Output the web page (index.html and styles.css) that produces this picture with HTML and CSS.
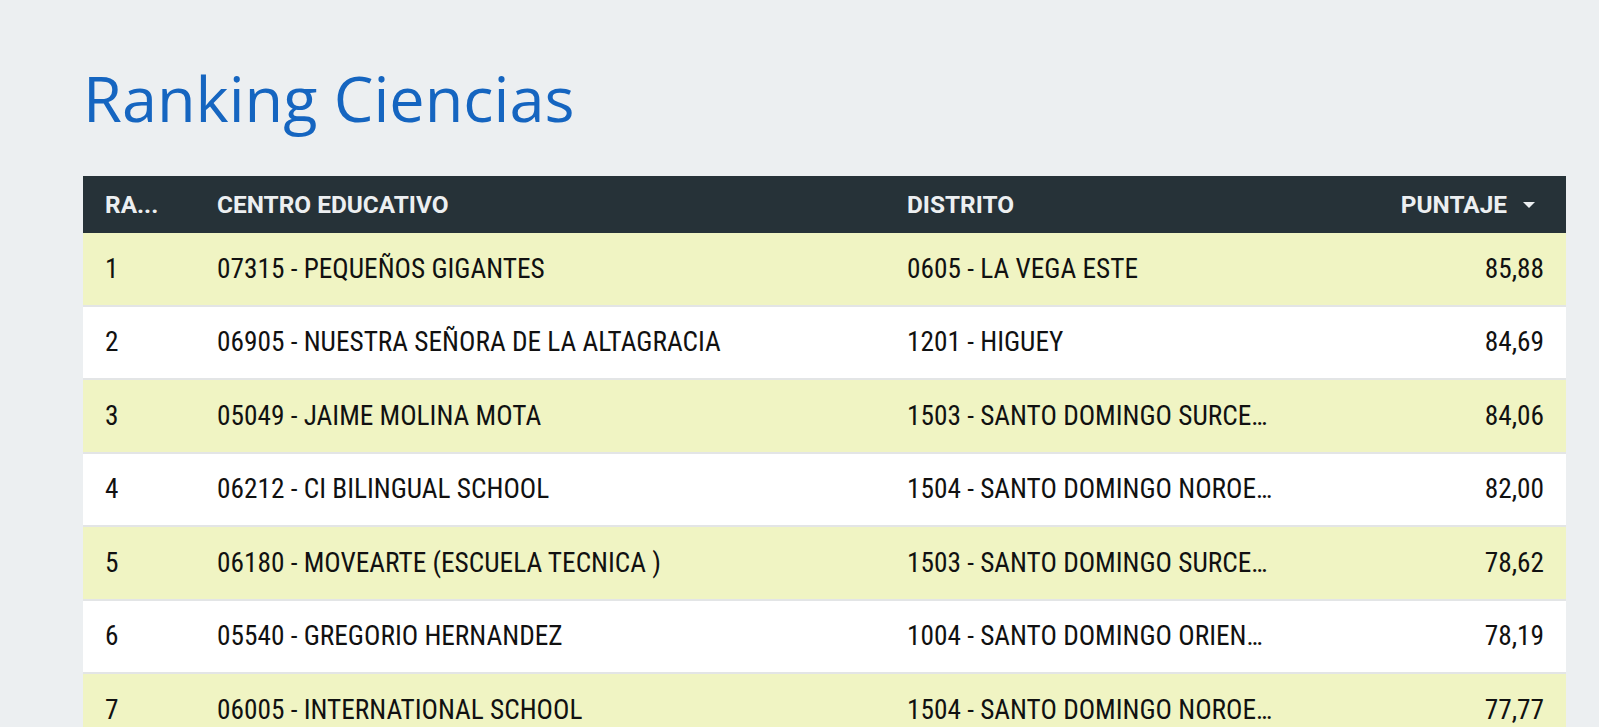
FILE: index.html
```html
<!DOCTYPE html>
<html lang="es">
<head>
<meta charset="utf-8">
<title>Ranking Ciencias</title>
<link rel="stylesheet" href="styles.css">
</head>
<body>
<main class="page">
  <h1 class="title">Ranking Ciencias</h1>
  <table class="ranking">
    <colgroup>
      <col class="c-rank">
      <col class="c-centro">
      <col class="c-distrito">
      <col class="c-puntaje">
    </colgroup>
    <thead>
      <tr>
        <th>RA...</th>
        <th>CENTRO EDUCATIVO</th>
        <th>DISTRITO</th>
        <th class="num"><span>PUNTAJE</span><span class="sort"></span></th>
      </tr>
    </thead>
    <tbody>
      <tr class="alt"><td>1</td><td>07315 - PEQUEÑOS GIGANTES</td><td>0605 - LA VEGA ESTE</td><td class="num">85,88</td></tr>
      <tr><td>2</td><td>06905 - NUESTRA SEÑORA DE LA ALTAGRACIA</td><td>1201 - HIGUEY</td><td class="num">84,69</td></tr>
      <tr class="alt"><td>3</td><td>05049 - JAIME MOLINA MOTA</td><td>1503 - SANTO DOMINGO SURCE…</td><td class="num">84,06</td></tr>
      <tr><td>4</td><td>06212 - CI BILINGUAL SCHOOL</td><td>1504 - SANTO DOMINGO NOROE…</td><td class="num">82,00</td></tr>
      <tr class="alt"><td>5</td><td>06180 - MOVEARTE (ESCUELA TECNICA )</td><td>1503 - SANTO DOMINGO SURCE…</td><td class="num">78,62</td></tr>
      <tr><td>6</td><td>05540 - GREGORIO HERNANDEZ</td><td>1004 - SANTO DOMINGO ORIEN…</td><td class="num">78,19</td></tr>
      <tr class="alt"><td>7</td><td>06005 - INTERNATIONAL SCHOOL</td><td>1504 - SANTO DOMINGO NOROE…</td><td class="num">77,77</td></tr>
    </tbody>
  </table>
</main>
</body>
</html>
```

FILE: styles.css
```css
html, body {
  margin: 0;
  padding: 0;
  background: #eceff1;
}

.page {
  padding: 66px 33px 0 83px;
}

.title {
  margin: 0 0 46px 0;
  font-family: "Open Sans", "Noto Sans", sans-serif;
  font-weight: 400;
  font-size: 63px;
  line-height: 64px;
  color: #1565c0;
}

.ranking {
  width: 1483px;
  border-collapse: collapse;
  table-layout: fixed;
}

.c-rank { width: 112px; }
.c-centro { width: 690px; }
.c-distrito { width: 412px; }
.c-puntaje { width: auto; }

.ranking th {
  background: #263238;
  color: #eceff1;
  font-family: Roboto, "Liberation Sans", sans-serif;
  font-weight: 700;
  font-size: 24.4px;
  text-align: left;
  height: 57px;
  padding: 0 22px;
  white-space: nowrap;
}

.ranking th.num {
  text-align: right;
  padding-right: 31px;
}

.sort {
  display: inline-block;
  width: 0;
  height: 0;
  margin-left: 16px;
  border-left: 6px solid transparent;
  border-right: 6px solid transparent;
  border-top: 6px solid #eceff1;
  vertical-align: middle;
  position: relative;
  top: -2px;
}

.ranking td {
  font-family: "Roboto Condensed", "Liberation Sans Narrow", Roboto, sans-serif;
  font-stretch: condensed;
  font-size: 27.3px;
  color: #111;
  height: 71.5px;
  padding: 0 22px;
  white-space: nowrap;
  overflow: hidden;
  background: #fff;
  border-bottom: 2px solid #e3e5e6;
}

.ranking tr.alt td {
  background: #f0f4c3;
}

.ranking td.num {
  text-align: right;
}
```
